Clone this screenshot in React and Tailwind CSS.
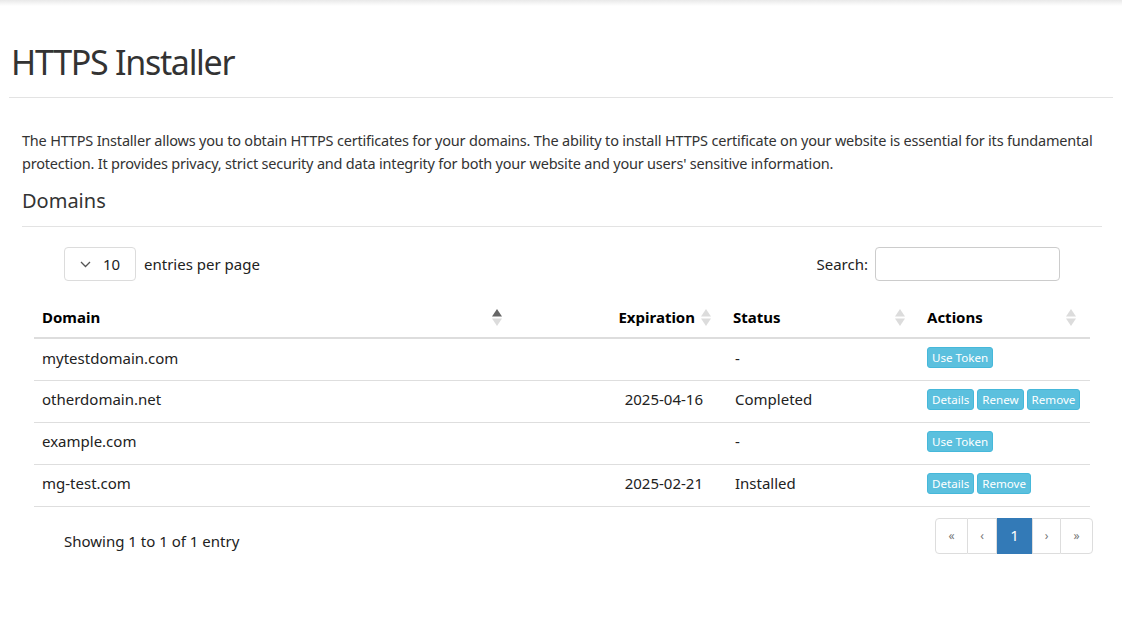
import React from "react";

const font = { fontFamily: '"Noto Sans", "Open Sans", sans-serif' };

function SortIcon({ active }) {
  return (
    <svg width="10" height="17" viewBox="0 0 10 17" className="shrink-0">
      <polygon points="5,0 10,7.5 0,7.5" fill={active ? "#666666" : "#dcdcdc"} />
      <polygon points="0,9.5 10,9.5 5,17" fill="#dcdcdc" />
    </svg>
  );
}

function Btn({ children }) {
  return (
    <span className="inline-flex items-center h-[21px] px-[4px] rounded-[3px] bg-[#5bc0de] border border-[#46b8da] text-white text-[11.6px] leading-none">
      {children}
    </span>
  );
}

const rows = [
  { domain: "mytestdomain.com", exp: "", status: "-", actions: ["Use Token"] },
  { domain: "otherdomain.net", exp: "2025-04-16", status: "Completed", actions: ["Details", "Renew", "Remove"] },
  { domain: "example.com", exp: "", status: "-", actions: ["Use Token"] },
  { domain: "mg-test.com", exp: "2025-02-21", status: "Installed", actions: ["Details", "Remove"] },
];

export default function App() {
  return (
    <div className="min-h-[619px] bg-white text-[#333]" style={font}>
      <div className="h-[6px] bg-gradient-to-b from-[#e9e9e9] to-white" />
      <div className="px-[9px]">
        <h1 className="pt-[34px] pb-[13px] pl-[2px] text-[34px] leading-[44px] tracking-[-1.3px] font-normal text-[#333] border-b border-[#e3e3e3] w-[1104px]">
          HTTPS Installer
        </h1>
      </div>
      <div className="pl-[22px] pr-[20px]">
        <p className="mt-[31px] text-[14.5px] leading-[22.5px] text-[#333] tracking-[-0.2px]">
          <span className="whitespace-nowrap">The HTTPS Installer allows you to obtain HTTPS certificates for your domains. The ability to install HTTPS certificate on your website is essential for its fundamental</span>
          <br />
          protection. It provides privacy, strict security and data integrity for both your website and your users' sensitive information.
        </p>
        <h2 className="mt-[13px] pb-[11px] text-[20px] leading-[28px] font-normal text-[#333] border-b border-[#e3e3e3]">
          Domains
        </h2>

        <div className="px-[12px]">
          <div className="mt-[20px] flex items-center justify-between px-[30px] h-[34px]">
            <div className="flex items-center gap-[8px]">
              <div className="w-[72px] h-[34px] border border-[#dcdcdc] rounded-[4px] flex items-center pl-[15px] gap-[12px]">
                <svg width="11" height="7" viewBox="0 0 11 7">
                  <polyline points="1,1 5.5,5.5 10,1" fill="none" stroke="#555" strokeWidth="1.3" />
                </svg>
                <span className="text-[15px] text-[#222]">10</span>
              </div>
              <span className="text-[15px] text-[#222]">entries per page</span>
            </div>
            <div className="flex items-center gap-[7px]">
              <span className="text-[15px] text-[#222]">Search:</span>
              <input className="w-[185px] h-[34px] border border-[#cccccc] rounded-[4px] outline-none px-2" />
            </div>
          </div>

          <table className="mt-[17px] w-[1056px] table-fixed border-collapse text-[15px] text-[#222]">
            <colgroup>
              <col className="w-[482px]" />
              <col className="w-[208px]" />
              <col className="w-[195px]" />
              <col className="w-[171px]" />
            </colgroup>
            <thead>
              <tr className="h-[40px] border-b-2 border-[#dddddd]">
                <th className="p-0 font-bold text-black">
                  <div className="flex items-center justify-between pl-[8px] pr-[14px]">
                    <span>Domain</span>
                    <SortIcon active />
                  </div>
                </th>
                <th className="p-0 font-bold text-black">
                  <div className="flex items-center justify-end gap-[6px] pr-[13px]">
                    <span>Expiration</span>
                    <SortIcon />
                  </div>
                </th>
                <th className="p-0 font-bold text-black">
                  <div className="flex items-center justify-between pl-[9px] pr-[14px]">
                    <span>Status</span>
                    <SortIcon />
                  </div>
                </th>
                <th className="p-0 font-bold text-black">
                  <div className="flex items-center justify-between pl-[8px] pr-[14px]">
                    <span>Actions</span>
                    <SortIcon />
                  </div>
                </th>
              </tr>
            </thead>
            <tbody>
              {rows.map((r) => (
                <tr key={r.domain} className="h-[42px] border-b border-[#dedede]">
                  <td className="pl-[8px] pt-0 pb-[3px]">{r.domain}</td>
                  <td className="pr-[21px] pt-0 pb-[3px] text-right">{r.exp}</td>
                  <td className="pl-[11px] pt-0 pb-[3px]">{r.status}</td>
                  <td className="pl-[8px] pt-0 pb-[3px]">
                    <div className="flex gap-[3px]">
                      {r.actions.map((a) => (
                        <Btn key={a}>{a}</Btn>
                      ))}
                    </div>
                  </td>
                </tr>
              ))}
            </tbody>
          </table>

          <div className="mt-[11px] flex items-start justify-between">
            <div className="pl-[30px] pt-[12px] text-[15px] text-[#222]">Showing 1 to 1 of 1 entry</div>
            <div className="flex h-[36px] -mr-[3px] text-[12px] text-[#777]">
              <span className="w-[33px] flex items-center justify-center border border-[#dddddd] rounded-l-[4px]">«</span>
              <span className="w-[29px] flex items-center justify-center border-y border-r border-[#dddddd]">‹</span>
              <span className="w-[35px] flex items-center justify-center bg-[#337ab7] text-white text-[15px]">1</span>
              <span className="w-[28px] flex items-center justify-center border-y border-l border-[#dddddd]">›</span>
              <span className="w-[33px] flex items-center justify-center border border-[#dddddd] rounded-r-[4px]">»</span>
            </div>
          </div>
        </div>
      </div>
    </div>
  );
}
